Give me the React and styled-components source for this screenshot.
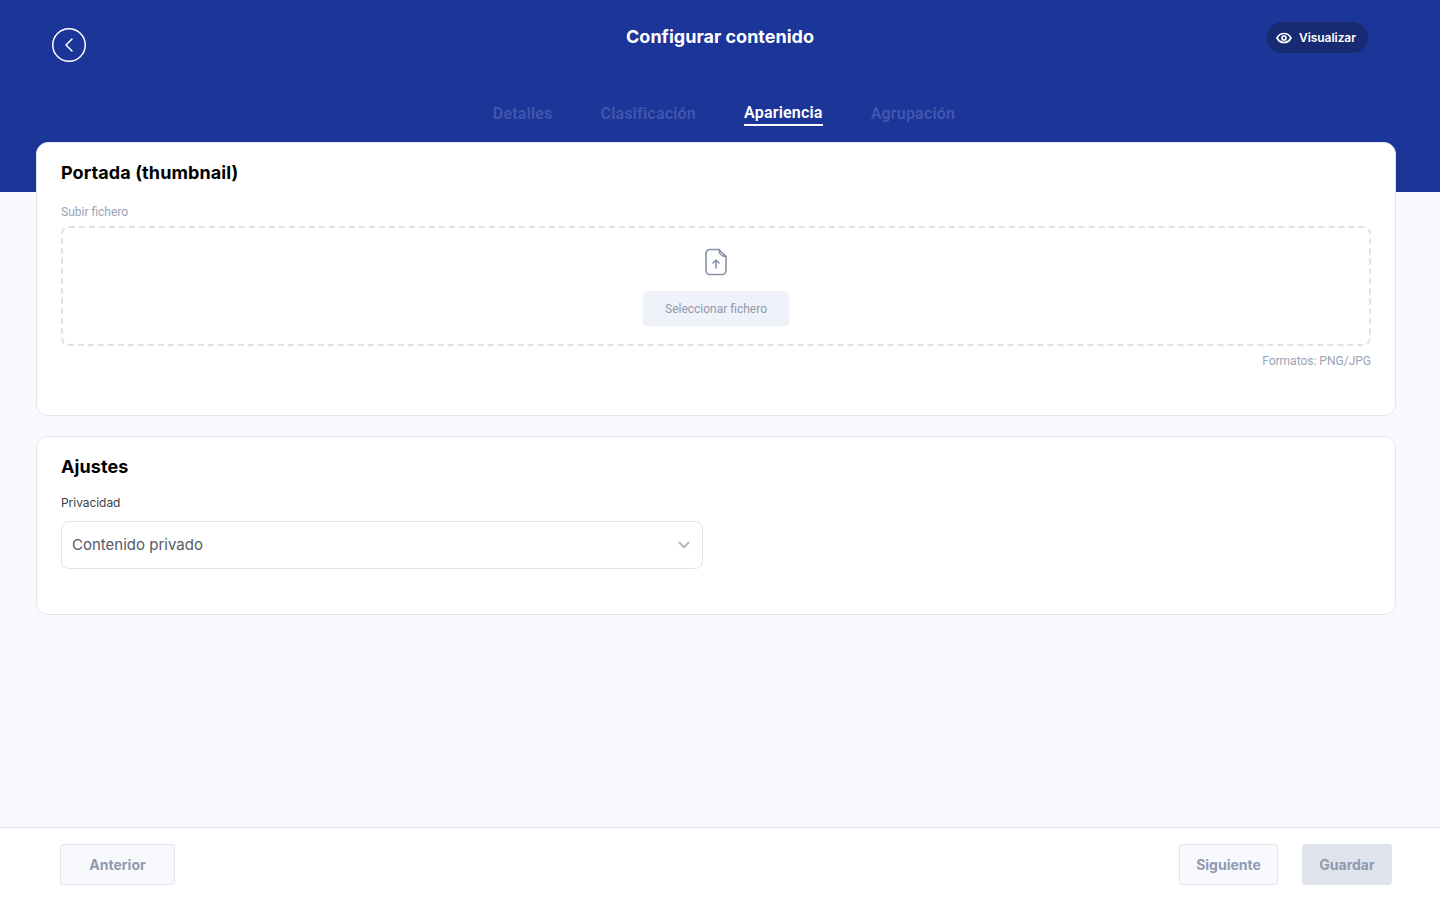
import React from 'react';
import styled, { createGlobalStyle } from 'styled-components';
import { ChevronDown } from 'lucide-react';

const GlobalStyle = createGlobalStyle`
    html, body {
        margin: 0;
        padding: 0;
        background: #f8f9fd;
        font-family: "Inter", "Liberation Sans", sans-serif;
    }
    * { box-sizing: border-box; }
`;

const Page = styled.div`
    width: 100%;
    height: 900px;
    display: flex;
    flex-direction: column;
    overflow: hidden;`;

const Header = styled.header`
    height: 192px;
    flex-shrink: 0;
    background: #1c3599;
    padding: 22px 72px 0;`;

const TopRow = styled.div`
    display: grid;
    grid-template-columns: 1fr auto 1fr;
    align-items: start;`;

const BackButton = styled.button`
    width: 34px;
    height: 34px;
    margin: 6px 0 0 -20px;
    padding: 0;
    border: none;
    background: transparent;
    display: block;`;

const Title = styled.h1`
    margin: 4px 0 0;
    font-size: 18px;
    line-height: 22px;
    font-weight: 700;
    color: #fff;`;

const PreviewButton = styled.button`
    justify-self: end;
    height: 31px;
    width: 101px;
    padding: 0 0 0 9px;
    border: none;
    border-radius: 16px;
    background: #172a72;
    color: #fff;
    font-family: "Inter", sans-serif;
    font-size: 12px;
    font-weight: 600;
    letter-spacing: -0.05px;
    display: flex;
    align-items: center;
    gap: 7px;`;

const Tabs = styled.nav`
    margin-top: 41px;
    margin-left: 8px;
    display: flex;
    justify-content: center;
    gap: 48px;`;

const Tab = styled.span`
    font-family: "Roboto", sans-serif;
    font-size: 16px;
    line-height: 22px;
    font-weight: 600;
    letter-spacing: 0.2px;
    color: ${(p) => (p.$active ? '#fff' : '#4157ad')};
    border-bottom: 2px solid ${(p) => (p.$active ? '#fff' : 'transparent')};
    position: relative;
    top: ${(p) => (p.$active ? '-1px' : '0')};`;

const Main = styled.main`
    flex: 1;
    margin-top: -50px;
    padding: 0 44px 0 36px;
    display: flex;
    flex-direction: column;
    gap: 20px;`;

const Card = styled.section`
    height: ${(p) => p.$height}px;
    padding: 18px 24px 0;
    background: #fff;
    border: 1px solid #e1e6ee;
    border-radius: 12px;`;

const CardTitle = styled.h2`
    margin: 0;
    font-size: 18px;
    line-height: 24px;
    font-weight: 700;
    letter-spacing: 0.1px;
    color: #000;`;

const UploadLabel = styled.div`
    margin-top: 20px;
    font-family: "Roboto", sans-serif;
    font-size: 12px;
    line-height: 14px;
    color: #9aa3b5;`;

const DropZone = styled.div`
    height: 120px;
    margin-top: 7px;
    padding-top: 20px;
    border: 2px dashed #dce4ea;
    border-radius: 8px;
    display: flex;
    flex-direction: column;
    align-items: center;`;

const SelectFile = styled.button`
    width: 146px;
    height: 35px;
    margin-top: 15px;
    border: none;
    border-radius: 4px;
    background: #eff2f8;
    color: #8f98ad;
    font-family: "Roboto", sans-serif;
    font-size: 12px;`;

const FileIcon = styled.svg`
    display: block;`;

const Formats = styled.div`
    margin-top: 8px;
    text-align: right;
    font-family: "Roboto", sans-serif;
    font-size: 12px;
    line-height: 14px;
    color: #9aa3b5;`;

const FieldLabel = styled.div`
    margin-top: 16px;
    font-size: 12px;
    line-height: 16px;
    letter-spacing: -0.05px;
    color: #3a3f4b;`;

const Select = styled.div`
    width: 642px;
    height: 48px;
    margin-top: 10px;
    padding: 0 9px 1px 10px;
    border: 1px solid #e1e5eb;
    border-radius: 8px;
    display: flex;
    align-items: center;
    justify-content: space-between;
    font-size: 15px;
    color: #555a68;`;

const Footer = styled.footer`
    height: 73px;
    flex-shrink: 0;
    padding: 16px 48px 0 60px;
    background: #fff;
    border-top: 1px solid #e1e6ee;
    display: flex;
    align-items: flex-start;
    gap: 24px;`;

const FooterButton = styled.button`
    width: ${(p) => p.$width}px;
    height: 41px;
    margin-right: ${(p) => (p.$push ? 'auto' : '0')};
    border: 1px solid ${(p) => (p.$solid ? '#dfe4ec' : '#e1e6ee')};
    border-radius: 3px;
    background: ${(p) => (p.$solid ? '#dfe4ec' : '#f8f9fd')};
    color: #8f99b0;
    font-family: "Inter", sans-serif;
    font-size: 14px;
    font-weight: 700;`;

export default function App() {
    return (
        <Page>
            <GlobalStyle />
            <Header>
                <TopRow>
                    <BackButton aria-label='Volver'>
                        <svg width='34' height='34' viewBox='0 0 34 34' fill='none' stroke='#fff' strokeWidth='1.5' strokeLinecap='round' strokeLinejoin='round'>
                            <circle cx='17' cy='17' r='16.250' />
                            <path d='M20 11l-6 6 6 6' />
                        </svg>
                    </BackButton>
                    <Title>Configurar contenido</Title>
                    <PreviewButton>
                        <svg width='16' height='16' viewBox='0 0 16 16' fill='none' stroke='#fff' strokeWidth='1.7'>
                            <path d='M1 8c1.600-3 4-4.500 7-4.500S13.400 5 15 8c-1.600 3-4 4.500-7 4.500S2.600 11 1 8z' strokeLinejoin='round' />
                            <circle cx='8' cy='8' r='2' />
                        </svg>
                        Visualizar
                    </PreviewButton>
                </TopRow>
                <Tabs>
                    <Tab>Detalles</Tab>
                    <Tab>Clasificación</Tab>
                    <Tab $active>Apariencia</Tab>
                    <Tab>Agrupación</Tab>
                </Tabs>
            </Header>
            <Main>
                <Card $height={274}>
                    <CardTitle>Portada (thumbnail)</CardTitle>
                    <UploadLabel>Subir fichero</UploadLabel>
                    <DropZone>
                        <FileIcon width='24' height='28' viewBox='0 0 24 28' fill='none' stroke='#8a93a8' strokeWidth='1.6' strokeLinecap='round' strokeLinejoin='round'>
                            <path d='M15 1.500H6a4 4 0 0 0-4 4v17a4 4 0 0 0 4 4h12a4 4 0 0 0 4-4V8.500' />
                            <path d='M15 1.500c0 4 2.500 7 7 7M15 1.500l7 7' />
                            <path d='M12 20v-8M9 15l3-3 3 3' />
                        </FileIcon>
                        <SelectFile>Seleccionar fichero</SelectFile>
                    </DropZone>
                    <Formats>Formatos: PNG/JPG</Formats>
                </Card>
                <Card $height={179}>
                    <CardTitle>Ajustes</CardTitle>
                    <FieldLabel>Privacidad</FieldLabel>
                    <Select>
                        Contenido privado
                        <ChevronDown size={18} strokeWidth={3} color='#b9bcc3' />
                    </Select>
                </Card>
            </Main>
            <Footer>
                <FooterButton $width={115} $push>Anterior</FooterButton>
                <FooterButton $width={99}>Siguiente</FooterButton>
                <FooterButton $width={90} $solid>Guardar</FooterButton>
            </Footer>
        </Page>
    );
}
